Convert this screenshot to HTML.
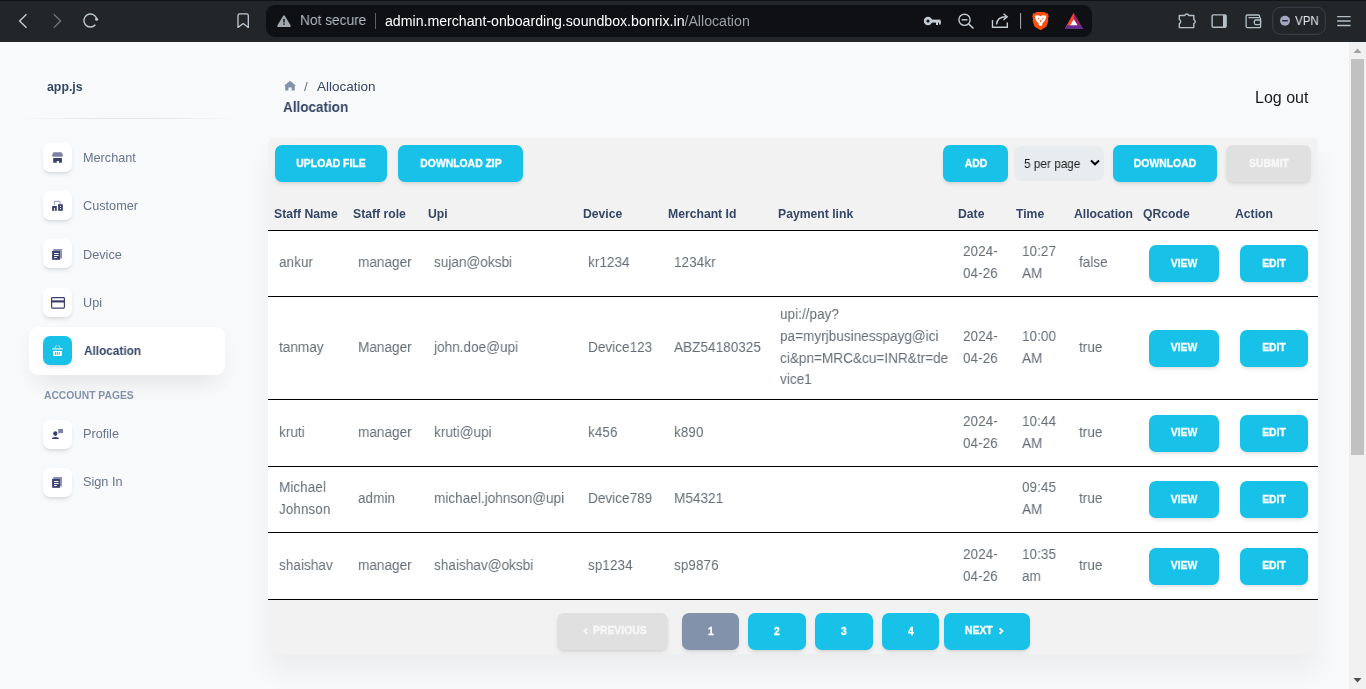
<!DOCTYPE html>
<html><head><meta charset="utf-8"><title>Allocation</title>
<style>
html,body{margin:0;padding:0;width:1366px;height:689px;overflow:hidden;background:#f8f9fa}
body{position:relative;font-family:"Liberation Sans", sans-serif}
.t{position:absolute;white-space:pre;will-change:transform}
.b{position:absolute}
svg.b{overflow:visible}
</style></head><body>
<div class="b" style="left:0px;top:0px;width:1366px;height:42px;background:#222629"></div>
<div class="b" style="left:0px;top:0px;width:1366px;height:1px;background:#111315"></div>
<svg class="b" style="left:0;top:0" width="260" height="42">
<path d="M26.5 14.2 L19.6 21 L26.5 27.8" fill="none" stroke="#c3ccd3" stroke-width="1.4"/>
<path d="M53.8 14.2 L60.6 21 L53.8 27.8" fill="none" stroke="#6b7277" stroke-width="1.4"/>
<path d="M95.38 24.68 A6.5 6.5 0 1 1 96.51 18.28" fill="none" stroke="#c3ccd3" stroke-width="1.4"/>
<circle cx="96.6" cy="19.2" r="1.5" fill="#c3ccd3"/>
<path d="M238 15.5 Q238 13.8 239.7 13.8 H246.6 Q248.3 13.8 248.3 15.5 V27.4 L243.15 23.6 L238 27.4 Z" fill="none" stroke="#c3ccd3" stroke-width="1.3" stroke-linejoin="round"/>
</svg>
<div class="b" style="left:266px;top:5px;width:826px;height:32px;background:#0e1013;border-radius:9px"></div>
<svg class="b" style="left:270px;top:10px" width="30" height="24">
<path d="M14 6.2 L19.9 16 H8.1 Z" fill="#a2a8ad" stroke="#a2a8ad" stroke-width="1.8" stroke-linejoin="round"/>
<rect x="13.3" y="8.9" width="1.4" height="3.6" fill="#0e1013"/>
<rect x="13.3" y="13.4" width="1.4" height="1.4" fill="#0e1013"/>
</svg>
<div class="t" style="left:299.90px;top:13.38px;font-size:14.80px;line-height:14.80px;color:#b3bcc6;font-weight:400;transform:scaleX(0.9259);transform-origin:0 0;">Not secure</div>
<div class="b" style="left:375px;top:13px;width:1px;height:16px;background:#5c6166"></div>
<div class="t" style="left:385.30px;top:13.72px;font-size:14.15px;line-height:14.15px;color:#67748e;font-weight:400;"><span style="color:#fff">admin.merchant-onboarding.soundbox.bonrix.in</span><span style="color:#9aa0a6">/Allocation</span></div>
<svg class="b" style="left:900px;top:0" width="200" height="42">
<circle cx="28" cy="21" r="4.2" fill="#c3ccd3"/>
<circle cx="28" cy="21" r="1.6" fill="#0e1013"/>
<rect x="30" y="19.6" width="10.5" height="3" fill="#c3ccd3"/>
<rect x="36" y="21" width="2" height="4" fill="#c3ccd3"/>
<rect x="39" y="21" width="1.8" height="3.5" fill="#c3ccd3"/>
<circle cx="64.5" cy="19.8" r="5.6" fill="none" stroke="#c3ccd3" stroke-width="1.4"/>
<path d="M61.6 19.8 H67.4" stroke="#c3ccd3" stroke-width="1.4"/>
<path d="M68.6 23.9 L73.5 28.5" stroke="#c3ccd3" stroke-width="1.5"/>
<path d="M92.5 20 V27.3 H107.3 V22.5" fill="none" stroke="#c3ccd3" stroke-width="1.4"/>
<path d="M96.5 24.5 C97 18.5 101 16.8 106 16.8" fill="none" stroke="#c3ccd3" stroke-width="1.4"/>
<path d="M103.5 13.8 L107.2 16.8 L103.5 19.9" fill="none" stroke="#c3ccd3" stroke-width="1.4"/>
<rect x="120" y="13" width="1.1" height="15.8" fill="#9c9fa3"/>
<path d="M136.5 12 H144.5 L146.5 13.5 L148 13.3 L148.6 16.5 L148 19 L148.3 21 L146.5 26.5 L140.5 30.2 L134.5 26.5 L132.7 21 L133 19 L132.4 16.5 L133 13.3 L134.5 13.5 Z" fill="#ff4f0f"/>
<path d="M134.8 15.8 L138.3 15.2 L140.5 16.2 L142.7 15.2 L146.2 15.8 L145.6 19.3 L144 21.8 L142.4 23.2 L142.2 25.2 L140.5 26 L138.8 25.2 L138.6 23.2 L137 21.8 L135.4 19.3 Z" fill="#fff"/>
<path d="M137.3 18 L139.2 18.6 L138.6 19.8 Z M143.7 18 L141.8 18.6 L142.4 19.8 Z M139.4 20.3 H141.6 L140.5 22.6 Z" fill="#ff4f0f"/>
<path d="M173.8 12.8 L183.2 29 H164.8 Z" fill="#9e1f63"/>
<path d="M173.8 12.8 L173.8 29 H164.8 Z" fill="#ff4724"/>
<path d="M166.9 25.2 H180.9 L183.2 29 H164.8 Z" fill="#662d91"/>
<path d="M173.8 19.2 L177.5 25.2 H170.1 Z" fill="#fff"/>
</svg>
<svg class="b" style="left:1160px;top:0" width="206" height="42">
<path d="M19.3 15.5 H24.8 A2.1 2.1 0 0 1 28.8 15.5 H33.8 V19.6 A2.1 2.1 0 0 1 33.8 23.6 V27.6 H19.3 V23.6 A2.1 2.1 0 0 0 19.3 19.6 Z" fill="none" stroke="#b4c0c8" stroke-width="1.4" stroke-linejoin="round"/>
<rect x="52.1" y="14.9" width="14" height="12.3" rx="1.2" fill="none" stroke="#b4c0c8" stroke-width="1.4"/>
<rect x="63" y="14.9" width="3.1" height="12.3" fill="#b4c0c8"/>
<path d="M99.6 17.6 V16.2 A1.2 1.2 0 0 0 98.4 15 H87.4 A1.3 1.3 0 0 0 86.1 16.3 V26.3 A1.3 1.3 0 0 0 87.4 27.6 H99.4 A1.2 1.2 0 0 0 100.6 26.4 V18.8 A1.2 1.2 0 0 0 99.4 17.6 H88.5" fill="none" stroke="#b4c0c8" stroke-width="1.3"/>
<rect x="94.3" y="20" width="6.3" height="4.6" rx="1.5" fill="none" stroke="#b4c0c8" stroke-width="1.3"/>
<rect x="112.8" y="7.3" width="52.5" height="27" rx="8" fill="none" stroke="#3d4349" stroke-width="1"/>
<circle cx="125" cy="20.7" r="5" fill="#a3a6c1"/>
<rect x="122.2" y="20" width="5.6" height="1.4" fill="#23272b"/>
<path d="M177.2 16.6 H190.6 M177.2 21 H190.6 M177.2 25.5 H190.6" stroke="#b4c0c8" stroke-width="1.3"/>
</svg>
<div class="t" style="left:1294.50px;top:14.20px;font-size:12.99px;line-height:12.99px;color:#e8eaed;font-weight:400;transform:scaleX(0.8929);transform-origin:0 0;">VPN</div>
<div class="b" style="left:0px;top:42px;width:1349px;height:647px;background:#f8f9fa"></div>
<div class="b" style="left:1349px;top:42px;width:17px;height:647px;background:#f1f1f1"></div>
<div class="b" style="left:1351px;top:59px;width:13px;height:396px;background:#c1c1c1"></div>
<svg class="b" style="left:1349px;top:42px" width="17" height="647">
<path d="M4.5 11 L8.5 6.5 L12.5 11 Z" fill="#a3a3a3"/>
<path d="M4.5 636 L8.5 640.5 L12.5 636 Z" fill="#505050"/>
</svg>
<div class="t" style="left:47.00px;top:80.95px;font-size:12.35px;line-height:12.35px;color:#344767;font-weight:700;">app.js</div>
<div class="b" style="left:14px;top:118px;width:226px;height:1px;background:linear-gradient(90deg,rgba(52,71,103,0),rgba(52,71,103,.12) 45%,rgba(52,71,103,.12) 55%,rgba(52,71,103,0))"></div>
<div class="b" style="left:29px;top:327px;width:196px;height:47.5px;background:#fff;border-radius:9px;box-shadow:0 18px 25px -10px rgba(0,0,0,.06), 0 8px 18px rgba(0,0,0,.03)"></div>
<div class="b" style="left:43px;top:143.0px;width:29px;height:29px;border-radius:7px;background:#fff;box-shadow:0 3px 5px -1px rgba(0,0,0,.09),0 2px 3px -1px rgba(0,0,0,.07)"></div>
<div class="t" style="left:83.20px;top:152.25px;font-size:12.70px;line-height:12.70px;color:#67748e;font-weight:400;">Merchant</div>
<div class="b" style="left:43px;top:191.2px;width:29px;height:29px;border-radius:7px;background:#fff;box-shadow:0 3px 5px -1px rgba(0,0,0,.09),0 2px 3px -1px rgba(0,0,0,.07)"></div>
<div class="t" style="left:83.20px;top:200.45px;font-size:12.70px;line-height:12.70px;color:#67748e;font-weight:400;">Customer</div>
<div class="b" style="left:43px;top:239.4px;width:29px;height:29px;border-radius:7px;background:#fff;box-shadow:0 3px 5px -1px rgba(0,0,0,.09),0 2px 3px -1px rgba(0,0,0,.07)"></div>
<div class="t" style="left:83.20px;top:248.65px;font-size:12.70px;line-height:12.70px;color:#67748e;font-weight:400;">Device</div>
<div class="b" style="left:43px;top:287.7px;width:29px;height:29px;border-radius:7px;background:#fff;box-shadow:0 3px 5px -1px rgba(0,0,0,.09),0 2px 3px -1px rgba(0,0,0,.07)"></div>
<div class="t" style="left:83.20px;top:296.95px;font-size:12.70px;line-height:12.70px;color:#67748e;font-weight:400;">Upi</div>
<div class="b" style="left:43px;top:336.0px;width:29px;height:29px;border-radius:7px;background:#17c1e8;box-shadow:0 3px 5px -1px rgba(0,0,0,.09),0 2px 3px -1px rgba(0,0,0,.07)"></div>
<div class="t" style="left:84.00px;top:344.91px;font-size:12.51px;line-height:12.51px;color:#344767;font-weight:700;transform:scaleX(0.9434);transform-origin:0 0;">Allocation</div>
<div class="t" style="left:43.50px;top:390.88px;font-size:10.30px;line-height:10.30px;color:#8392ab;font-weight:700;">ACCOUNT PAGES</div>
<div class="b" style="left:43px;top:419.6px;width:29px;height:29px;border-radius:7px;background:#fff;box-shadow:0 3px 5px -1px rgba(0,0,0,.09),0 2px 3px -1px rgba(0,0,0,.07)"></div>
<div class="t" style="left:83.10px;top:427.85px;font-size:12.70px;line-height:12.70px;color:#67748e;font-weight:400;">Profile</div>
<div class="b" style="left:43px;top:467.8px;width:29px;height:29px;border-radius:7px;background:#fff;box-shadow:0 3px 5px -1px rgba(0,0,0,.09),0 2px 3px -1px rgba(0,0,0,.07)"></div>
<div class="t" style="left:83.10px;top:476.05px;font-size:12.70px;line-height:12.70px;color:#67748e;font-weight:400;">Sign In</div>
<svg class="b" style="left:0;top:0" width="80" height="500">
<path d="M53.5 152.3 H61.5 L63 155.3 Q63 156.8 61.6 156.8 H53.4 Q52 156.8 52 155.3 Z" fill="#7d81a6"/>
<path d="M53.2 157.9 H61.9 V162.8 H59 V160.9 H56.8 V162.8 H53.2 Z" fill="#3a416f"/>
<path d="M54.4 205 V201.3 H60 V204.2" fill="none" stroke="#8f93b4" stroke-width="1"/>
<rect x="52.1" y="206" width="4.7" height="4.8" fill="#3a416f"/>
<rect x="54" y="208" width="0.9" height="2.8" fill="#fff"/>
<rect x="58.1" y="204.2" width="4.7" height="6.6" fill="#3a416f"/>
<rect x="60" y="205.8" width="0.9" height="1.2" fill="#fff"/>
<rect x="60" y="208" width="0.9" height="1.2" fill="#fff"/>
<path d="M53.3 249.1 H62 V258.5 H60.1 V250.9 H53.3 Z" fill="#8f93b4"/>
<rect x="52.1" y="250.9" width="8" height="8.9" fill="#3a416f"/>
<rect x="54.1" y="253.0" width="4.5" height="1" fill="#fff"/><rect x="54.1" y="255.0" width="4.5" height="1" fill="#fff"/><rect x="54.1" y="257.0" width="2.7" height="1" fill="#fff"/>
<rect x="51.6" y="297.7" width="12.8" height="10.4" rx="0.8" fill="none" stroke="#3a416f" stroke-width="1.2"/>
<rect x="51.6" y="300.3" width="12.8" height="2.2" fill="#3a416f"/>
<path d="M54.9 348 L56.5 345.1 M58.6 345.1 L60.2 348" stroke="rgba(255,255,255,.75)" stroke-width="0.9"/>
<rect x="52.1" y="348" width="10.9" height="1.8" rx="0.5" fill="rgba(255,255,255,.6)"/>
<path d="M53 350.9 H61.9 V355 Q61.9 356 60.9 356 H54 Q53 356 53 355 Z" fill="#fff"/>
<rect x="55" y="352" width="1.1" height="2.7" rx="0.5" fill="#17c1e8"/><rect x="56.8" y="352" width="1.1" height="2.7" rx="0.5" fill="#17c1e8"/><rect x="58.7" y="352" width="1.1" height="2.7" rx="0.5" fill="#17c1e8"/>
<ellipse cx="55.3" cy="433.6" rx="2.1" ry="2.35" fill="#3a416f"/>
<path d="M51.9 439 Q52 437 55.4 437 Q58.8 437 59 439 Z" fill="#3a416f"/>
<path d="M58.2 429.1 H63 V432.9 H59.7 L59.2 433.8 L58.2 432.9 Z" fill="#7d81a6"/>
<path d="M53.3 477.1 H62 V486.5 H60.1 V478.9 H53.3 Z" fill="#8f93b4"/>
<rect x="52.1" y="478.9" width="8" height="8.9" fill="#3a416f"/>
<rect x="54.1" y="481.0" width="4.5" height="1" fill="#fff"/><rect x="54.1" y="483.0" width="4.5" height="1" fill="#fff"/><rect x="54.1" y="485.0" width="2.7" height="1" fill="#fff"/>
</svg>
<svg class="b" style="left:282px;top:78px" width="16" height="16">
<path d="M2 7.8 L8 2.7 L14 7.8 L12.8 7.8 V12.6 H9.6 V9.6 H6.4 V12.6 H3.2 V7.8 Z" fill="#8392ab"/>
</svg>
<div class="t" style="left:303.50px;top:79.67px;font-size:13.50px;line-height:13.50px;color:#6c757d;font-weight:400;">/</div>
<div class="t" style="left:316.80px;top:79.97px;font-size:13.50px;line-height:13.50px;color:#344767;font-weight:400;">Allocation</div>
<div class="t" style="left:283.00px;top:99.83px;font-size:14.85px;line-height:14.85px;color:#344767;font-weight:700;transform:scaleX(0.9091);transform-origin:0 0;">Allocation</div>
<div class="t" style="left:1255.30px;top:90.31px;font-size:16.00px;line-height:16.00px;color:#1a1a1a;font-weight:400;">Log out</div>
<div class="b" style="left:268px;top:138px;width:1050px;height:516px;background:#f2f2f2;border-radius:6px;box-shadow:0 18px 27px 0 rgba(0,0,0,.05)"></div>
<div class="b" style="left:275px;top:145px;width:112px;height:37px;background:#17c1e8;border-radius:7px;box-shadow:0 3px 5px -1px rgba(0,0,0,.09),0 2px 3px -1px rgba(0,0,0,.07);"></div>
<div class="t" style="left:131.00px;width:400px;text-align:center;top:158.50px;font-size:10.4px;line-height:10.4px;color:#fff;font-weight:700;-webkit-text-stroke:0.3px #fff;">UPLOAD FILE</div>
<div class="b" style="left:398px;top:145px;width:125px;height:37px;background:#17c1e8;border-radius:7px;box-shadow:0 3px 5px -1px rgba(0,0,0,.09),0 2px 3px -1px rgba(0,0,0,.07);"></div>
<div class="t" style="left:260.50px;width:400px;text-align:center;top:158.50px;font-size:10.4px;line-height:10.4px;color:#fff;font-weight:700;-webkit-text-stroke:0.3px #fff;">DOWNLOAD ZIP</div>
<div class="b" style="left:943px;top:145px;width:65px;height:37px;background:#17c1e8;border-radius:7px;box-shadow:0 3px 5px -1px rgba(0,0,0,.09),0 2px 3px -1px rgba(0,0,0,.07);"></div>
<div class="t" style="left:775.50px;width:400px;text-align:center;top:158.50px;font-size:10.4px;line-height:10.4px;color:#fff;font-weight:700;-webkit-text-stroke:0.3px #fff;">ADD</div>
<div class="b" style="left:1014px;top:146.3px;width:90px;height:34.7px;background:#e9ecef;border-radius:7px"></div>
<div class="t" style="left:1023.50px;top:157.31px;font-size:12.98px;line-height:12.98px;color:#1a1a1a;font-weight:400;transform:scaleX(0.9091);transform-origin:0 0;">5 per page</div>
<svg class="b" style="left:1088px;top:156px" width="14" height="14"><path d="M3 4.5 L7 8.3 L11 4.5" fill="none" stroke="#000" stroke-width="2"/></svg>
<div class="b" style="left:1113px;top:145px;width:104px;height:37px;background:#17c1e8;border-radius:7px;box-shadow:0 3px 5px -1px rgba(0,0,0,.09),0 2px 3px -1px rgba(0,0,0,.07);"></div>
<div class="t" style="left:965.00px;width:400px;text-align:center;top:158.50px;font-size:10.4px;line-height:10.4px;color:#fff;font-weight:700;-webkit-text-stroke:0.3px #fff;">DOWNLOAD</div>
<div class="b" style="left:1226px;top:145px;width:85px;height:37px;background:#e0e0e0;border-radius:7px;box-shadow:0 3px 5px -1px rgba(0,0,0,.09),0 2px 3px -1px rgba(0,0,0,.07);"></div>
<div class="t" style="left:1068.50px;width:400px;text-align:center;top:158.50px;font-size:10.4px;line-height:10.4px;color:#f7f7f7;font-weight:700;-webkit-text-stroke:0.3px #f7f7f7;">SUBMIT</div>
<div class="t" style="left:273.70px;top:207.67px;font-size:12.20px;line-height:12.20px;color:#344767;font-weight:700;">Staff Name</div>
<div class="t" style="left:352.50px;top:207.67px;font-size:12.20px;line-height:12.20px;color:#344767;font-weight:700;">Staff role</div>
<div class="t" style="left:428.40px;top:207.67px;font-size:12.20px;line-height:12.20px;color:#344767;font-weight:700;">Upi</div>
<div class="t" style="left:582.50px;top:207.67px;font-size:12.20px;line-height:12.20px;color:#344767;font-weight:700;">Device</div>
<div class="t" style="left:668.30px;top:207.67px;font-size:12.20px;line-height:12.20px;color:#344767;font-weight:700;">Merchant Id</div>
<div class="t" style="left:777.70px;top:207.67px;font-size:12.20px;line-height:12.20px;color:#344767;font-weight:700;">Payment link</div>
<div class="t" style="left:957.90px;top:207.67px;font-size:12.20px;line-height:12.20px;color:#344767;font-weight:700;">Date</div>
<div class="t" style="left:1016.00px;top:207.67px;font-size:12.20px;line-height:12.20px;color:#344767;font-weight:700;">Time</div>
<div class="t" style="left:1073.70px;top:207.67px;font-size:12.20px;line-height:12.20px;color:#344767;font-weight:700;">Allocation</div>
<div class="t" style="left:1143.30px;top:207.67px;font-size:12.20px;line-height:12.20px;color:#344767;font-weight:700;">QRcode</div>
<div class="t" style="left:1235.10px;top:207.67px;font-size:12.20px;line-height:12.20px;color:#344767;font-weight:700;">Action</div>
<div class="b" style="left:268px;top:230px;width:1050px;height:370px;background:#fff"></div>
<div class="b" style="left:268px;top:230px;width:1050px;height:1px;background:#000"></div>
<div class="b" style="left:268px;top:296px;width:1050px;height:1px;background:#000"></div>
<div class="b" style="left:268px;top:399px;width:1050px;height:1px;background:#000"></div>
<div class="b" style="left:268px;top:466px;width:1050px;height:1px;background:#000"></div>
<div class="b" style="left:268px;top:532px;width:1050px;height:1px;background:#000"></div>
<div class="b" style="left:268px;top:599px;width:1050px;height:1px;background:#000"></div>
<div class="t" style="left:279.40px;top:254.08px;font-size:15.50px;line-height:15.50px;color:#656e77;font-weight:400;transform:scaleX(0.8772);transform-origin:0 0;">ankur</div>
<div class="t" style="left:358.00px;top:254.08px;font-size:15.50px;line-height:15.50px;color:#656e77;font-weight:400;transform:scaleX(0.8772);transform-origin:0 0;">manager</div>
<div class="t" style="left:434.00px;top:254.08px;font-size:15.50px;line-height:15.50px;color:#656e77;font-weight:400;transform:scaleX(0.8772);transform-origin:0 0;">sujan@oksbi</div>
<div class="t" style="left:588.00px;top:254.08px;font-size:15.50px;line-height:15.50px;color:#656e77;font-weight:400;transform:scaleX(0.8772);transform-origin:0 0;">kr1234</div>
<div class="t" style="left:673.80px;top:254.08px;font-size:15.50px;line-height:15.50px;color:#656e77;font-weight:400;transform:scaleX(0.8772);transform-origin:0 0;">1234kr</div>
<div class="t" style="left:963.40px;top:243.15px;font-size:15.50px;line-height:15.50px;color:#656e77;font-weight:400;transform:scaleX(0.8772);transform-origin:0 0;">2024-</div>
<div class="t" style="left:963.40px;top:265.00px;font-size:15.50px;line-height:15.50px;color:#656e77;font-weight:400;transform:scaleX(0.8772);transform-origin:0 0;">04-26</div>
<div class="t" style="left:1021.80px;top:243.15px;font-size:15.50px;line-height:15.50px;color:#656e77;font-weight:400;transform:scaleX(0.8772);transform-origin:0 0;">10:27</div>
<div class="t" style="left:1021.80px;top:265.00px;font-size:15.50px;line-height:15.50px;color:#656e77;font-weight:400;transform:scaleX(0.8772);transform-origin:0 0;">AM</div>
<div class="t" style="left:1079.40px;top:254.08px;font-size:15.50px;line-height:15.50px;color:#656e77;font-weight:400;transform:scaleX(0.8772);transform-origin:0 0;">false</div>
<div class="b" style="left:1149px;top:245.0px;width:70px;height:37.0px;background:#17c1e8;border-radius:7px;box-shadow:0 3px 5px -1px rgba(0,0,0,.09),0 2px 3px -1px rgba(0,0,0,.07);"></div>
<div class="t" style="left:984.00px;width:400px;text-align:center;top:258.50px;font-size:10.4px;line-height:10.4px;color:#fff;font-weight:700;-webkit-text-stroke:0.3px #fff;">VIEW</div>
<div class="b" style="left:1240px;top:245.0px;width:68px;height:37.0px;background:#17c1e8;border-radius:7px;box-shadow:0 3px 5px -1px rgba(0,0,0,.09),0 2px 3px -1px rgba(0,0,0,.07);"></div>
<div class="t" style="left:1074.00px;width:400px;text-align:center;top:258.50px;font-size:10.4px;line-height:10.4px;color:#fff;font-weight:700;-webkit-text-stroke:0.3px #fff;">EDIT</div>
<div class="t" style="left:279.40px;top:338.58px;font-size:15.50px;line-height:15.50px;color:#656e77;font-weight:400;transform:scaleX(0.8772);transform-origin:0 0;">tanmay</div>
<div class="t" style="left:358.00px;top:338.58px;font-size:15.50px;line-height:15.50px;color:#656e77;font-weight:400;transform:scaleX(0.8772);transform-origin:0 0;">Manager</div>
<div class="t" style="left:434.00px;top:338.58px;font-size:15.50px;line-height:15.50px;color:#656e77;font-weight:400;transform:scaleX(0.8772);transform-origin:0 0;">john.doe@upi</div>
<div class="t" style="left:588.00px;top:338.58px;font-size:15.50px;line-height:15.50px;color:#656e77;font-weight:400;transform:scaleX(0.8772);transform-origin:0 0;">Device123</div>
<div class="t" style="left:673.80px;top:338.58px;font-size:15.50px;line-height:15.50px;color:#656e77;font-weight:400;transform:scaleX(0.8772);transform-origin:0 0;">ABZ54180325</div>
<div class="t" style="left:779.50px;top:305.80px;font-size:15.50px;line-height:15.50px;color:#656e77;font-weight:400;transform:scaleX(0.8772);transform-origin:0 0;">upi://pay?</div>
<div class="t" style="left:779.50px;top:327.65px;font-size:15.50px;line-height:15.50px;color:#656e77;font-weight:400;transform:scaleX(0.8772);transform-origin:0 0;">pa=myrjbusinesspayg@ici</div>
<div class="t" style="left:779.50px;top:349.50px;font-size:15.50px;line-height:15.50px;color:#656e77;font-weight:400;transform:scaleX(0.8772);transform-origin:0 0;">ci&amp;pn=MRC&amp;cu=INR&amp;tr=de</div>
<div class="t" style="left:779.50px;top:371.35px;font-size:15.50px;line-height:15.50px;color:#656e77;font-weight:400;transform:scaleX(0.8772);transform-origin:0 0;">vice1</div>
<div class="t" style="left:963.40px;top:327.65px;font-size:15.50px;line-height:15.50px;color:#656e77;font-weight:400;transform:scaleX(0.8772);transform-origin:0 0;">2024-</div>
<div class="t" style="left:963.40px;top:349.50px;font-size:15.50px;line-height:15.50px;color:#656e77;font-weight:400;transform:scaleX(0.8772);transform-origin:0 0;">04-26</div>
<div class="t" style="left:1021.80px;top:327.65px;font-size:15.50px;line-height:15.50px;color:#656e77;font-weight:400;transform:scaleX(0.8772);transform-origin:0 0;">10:00</div>
<div class="t" style="left:1021.80px;top:349.50px;font-size:15.50px;line-height:15.50px;color:#656e77;font-weight:400;transform:scaleX(0.8772);transform-origin:0 0;">AM</div>
<div class="t" style="left:1079.40px;top:338.58px;font-size:15.50px;line-height:15.50px;color:#656e77;font-weight:400;transform:scaleX(0.8772);transform-origin:0 0;">true</div>
<div class="b" style="left:1149px;top:329.5px;width:70px;height:37.0px;background:#17c1e8;border-radius:7px;box-shadow:0 3px 5px -1px rgba(0,0,0,.09),0 2px 3px -1px rgba(0,0,0,.07);"></div>
<div class="t" style="left:984.00px;width:400px;text-align:center;top:343.00px;font-size:10.4px;line-height:10.4px;color:#fff;font-weight:700;-webkit-text-stroke:0.3px #fff;">VIEW</div>
<div class="b" style="left:1240px;top:329.5px;width:68px;height:37.0px;background:#17c1e8;border-radius:7px;box-shadow:0 3px 5px -1px rgba(0,0,0,.09),0 2px 3px -1px rgba(0,0,0,.07);"></div>
<div class="t" style="left:1074.00px;width:400px;text-align:center;top:343.00px;font-size:10.4px;line-height:10.4px;color:#fff;font-weight:700;-webkit-text-stroke:0.3px #fff;">EDIT</div>
<div class="t" style="left:279.40px;top:423.58px;font-size:15.50px;line-height:15.50px;color:#656e77;font-weight:400;transform:scaleX(0.8772);transform-origin:0 0;">kruti</div>
<div class="t" style="left:358.00px;top:423.58px;font-size:15.50px;line-height:15.50px;color:#656e77;font-weight:400;transform:scaleX(0.8772);transform-origin:0 0;">manager</div>
<div class="t" style="left:434.00px;top:423.58px;font-size:15.50px;line-height:15.50px;color:#656e77;font-weight:400;transform:scaleX(0.8772);transform-origin:0 0;">kruti@upi</div>
<div class="t" style="left:588.00px;top:423.58px;font-size:15.50px;line-height:15.50px;color:#656e77;font-weight:400;transform:scaleX(0.8772);transform-origin:0 0;">k456</div>
<div class="t" style="left:673.80px;top:423.58px;font-size:15.50px;line-height:15.50px;color:#656e77;font-weight:400;transform:scaleX(0.8772);transform-origin:0 0;">k890</div>
<div class="t" style="left:963.40px;top:412.65px;font-size:15.50px;line-height:15.50px;color:#656e77;font-weight:400;transform:scaleX(0.8772);transform-origin:0 0;">2024-</div>
<div class="t" style="left:963.40px;top:434.50px;font-size:15.50px;line-height:15.50px;color:#656e77;font-weight:400;transform:scaleX(0.8772);transform-origin:0 0;">04-26</div>
<div class="t" style="left:1021.80px;top:412.65px;font-size:15.50px;line-height:15.50px;color:#656e77;font-weight:400;transform:scaleX(0.8772);transform-origin:0 0;">10:44</div>
<div class="t" style="left:1021.80px;top:434.50px;font-size:15.50px;line-height:15.50px;color:#656e77;font-weight:400;transform:scaleX(0.8772);transform-origin:0 0;">AM</div>
<div class="t" style="left:1079.40px;top:423.58px;font-size:15.50px;line-height:15.50px;color:#656e77;font-weight:400;transform:scaleX(0.8772);transform-origin:0 0;">true</div>
<div class="b" style="left:1149px;top:414.5px;width:70px;height:37.0px;background:#17c1e8;border-radius:7px;box-shadow:0 3px 5px -1px rgba(0,0,0,.09),0 2px 3px -1px rgba(0,0,0,.07);"></div>
<div class="t" style="left:984.00px;width:400px;text-align:center;top:428.00px;font-size:10.4px;line-height:10.4px;color:#fff;font-weight:700;-webkit-text-stroke:0.3px #fff;">VIEW</div>
<div class="b" style="left:1240px;top:414.5px;width:68px;height:37.0px;background:#17c1e8;border-radius:7px;box-shadow:0 3px 5px -1px rgba(0,0,0,.09),0 2px 3px -1px rgba(0,0,0,.07);"></div>
<div class="t" style="left:1074.00px;width:400px;text-align:center;top:428.00px;font-size:10.4px;line-height:10.4px;color:#fff;font-weight:700;-webkit-text-stroke:0.3px #fff;">EDIT</div>
<div class="t" style="left:279.40px;top:479.15px;font-size:15.50px;line-height:15.50px;color:#656e77;font-weight:400;transform:scaleX(0.8772);transform-origin:0 0;">Michael</div>
<div class="t" style="left:279.40px;top:501.00px;font-size:15.50px;line-height:15.50px;color:#656e77;font-weight:400;transform:scaleX(0.8772);transform-origin:0 0;">Johnson</div>
<div class="t" style="left:358.00px;top:490.08px;font-size:15.50px;line-height:15.50px;color:#656e77;font-weight:400;transform:scaleX(0.8772);transform-origin:0 0;">admin</div>
<div class="t" style="left:434.00px;top:490.08px;font-size:15.50px;line-height:15.50px;color:#656e77;font-weight:400;transform:scaleX(0.8772);transform-origin:0 0;">michael.johnson@upi</div>
<div class="t" style="left:588.00px;top:490.08px;font-size:15.50px;line-height:15.50px;color:#656e77;font-weight:400;transform:scaleX(0.8772);transform-origin:0 0;">Device789</div>
<div class="t" style="left:673.80px;top:490.08px;font-size:15.50px;line-height:15.50px;color:#656e77;font-weight:400;transform:scaleX(0.8772);transform-origin:0 0;">M54321</div>
<div class="t" style="left:1021.80px;top:479.15px;font-size:15.50px;line-height:15.50px;color:#656e77;font-weight:400;transform:scaleX(0.8772);transform-origin:0 0;">09:45</div>
<div class="t" style="left:1021.80px;top:501.00px;font-size:15.50px;line-height:15.50px;color:#656e77;font-weight:400;transform:scaleX(0.8772);transform-origin:0 0;">AM</div>
<div class="t" style="left:1079.40px;top:490.08px;font-size:15.50px;line-height:15.50px;color:#656e77;font-weight:400;transform:scaleX(0.8772);transform-origin:0 0;">true</div>
<div class="b" style="left:1149px;top:481.0px;width:70px;height:37.0px;background:#17c1e8;border-radius:7px;box-shadow:0 3px 5px -1px rgba(0,0,0,.09),0 2px 3px -1px rgba(0,0,0,.07);"></div>
<div class="t" style="left:984.00px;width:400px;text-align:center;top:494.50px;font-size:10.4px;line-height:10.4px;color:#fff;font-weight:700;-webkit-text-stroke:0.3px #fff;">VIEW</div>
<div class="b" style="left:1240px;top:481.0px;width:68px;height:37.0px;background:#17c1e8;border-radius:7px;box-shadow:0 3px 5px -1px rgba(0,0,0,.09),0 2px 3px -1px rgba(0,0,0,.07);"></div>
<div class="t" style="left:1074.00px;width:400px;text-align:center;top:494.50px;font-size:10.4px;line-height:10.4px;color:#fff;font-weight:700;-webkit-text-stroke:0.3px #fff;">EDIT</div>
<div class="t" style="left:279.40px;top:556.58px;font-size:15.50px;line-height:15.50px;color:#656e77;font-weight:400;transform:scaleX(0.8772);transform-origin:0 0;">shaishav</div>
<div class="t" style="left:358.00px;top:556.58px;font-size:15.50px;line-height:15.50px;color:#656e77;font-weight:400;transform:scaleX(0.8772);transform-origin:0 0;">manager</div>
<div class="t" style="left:434.00px;top:556.58px;font-size:15.50px;line-height:15.50px;color:#656e77;font-weight:400;transform:scaleX(0.8772);transform-origin:0 0;">shaishav@oksbi</div>
<div class="t" style="left:588.00px;top:556.58px;font-size:15.50px;line-height:15.50px;color:#656e77;font-weight:400;transform:scaleX(0.8772);transform-origin:0 0;">sp1234</div>
<div class="t" style="left:673.80px;top:556.58px;font-size:15.50px;line-height:15.50px;color:#656e77;font-weight:400;transform:scaleX(0.8772);transform-origin:0 0;">sp9876</div>
<div class="t" style="left:963.40px;top:545.65px;font-size:15.50px;line-height:15.50px;color:#656e77;font-weight:400;transform:scaleX(0.8772);transform-origin:0 0;">2024-</div>
<div class="t" style="left:963.40px;top:567.50px;font-size:15.50px;line-height:15.50px;color:#656e77;font-weight:400;transform:scaleX(0.8772);transform-origin:0 0;">04-26</div>
<div class="t" style="left:1021.80px;top:545.65px;font-size:15.50px;line-height:15.50px;color:#656e77;font-weight:400;transform:scaleX(0.8772);transform-origin:0 0;">10:35</div>
<div class="t" style="left:1021.80px;top:567.50px;font-size:15.50px;line-height:15.50px;color:#656e77;font-weight:400;transform:scaleX(0.8772);transform-origin:0 0;">am</div>
<div class="t" style="left:1079.40px;top:556.58px;font-size:15.50px;line-height:15.50px;color:#656e77;font-weight:400;transform:scaleX(0.8772);transform-origin:0 0;">true</div>
<div class="b" style="left:1149px;top:547.5px;width:70px;height:37.0px;background:#17c1e8;border-radius:7px;box-shadow:0 3px 5px -1px rgba(0,0,0,.09),0 2px 3px -1px rgba(0,0,0,.07);"></div>
<div class="t" style="left:984.00px;width:400px;text-align:center;top:561.00px;font-size:10.4px;line-height:10.4px;color:#fff;font-weight:700;-webkit-text-stroke:0.3px #fff;">VIEW</div>
<div class="b" style="left:1240px;top:547.5px;width:68px;height:37.0px;background:#17c1e8;border-radius:7px;box-shadow:0 3px 5px -1px rgba(0,0,0,.09),0 2px 3px -1px rgba(0,0,0,.07);"></div>
<div class="t" style="left:1074.00px;width:400px;text-align:center;top:561.00px;font-size:10.4px;line-height:10.4px;color:#fff;font-weight:700;-webkit-text-stroke:0.3px #fff;">EDIT</div>
<div class="b" style="left:557px;top:613px;width:111px;height:37px;background:#e0e0e0;border-radius:7px;box-shadow:0 3px 5px -1px rgba(0,0,0,.09),0 2px 3px -1px rgba(0,0,0,.07);"></div>
<div class="t" style="left:593.00px;top:626.00px;font-size:10.40px;line-height:10.40px;color:#f7f7f7;font-weight:700;-webkit-text-stroke:0.3px #f7f7f7;">PREVIOUS</div>
<svg class="b" style="left:580px;top:625px" width="12" height="12"><path d="M7.2 3.4 L4.4 6.1 L7.2 8.8" fill="none" stroke="#f7f7f7" stroke-width="1.9"/></svg>
<div class="b" style="left:682px;top:613px;width:57px;height:37px;background:#8392ab;border-radius:7px;box-shadow:0 3px 5px -1px rgba(0,0,0,.09),0 2px 3px -1px rgba(0,0,0,.07);"></div>
<div class="t" style="left:510.50px;width:400px;text-align:center;top:626.50px;font-size:10.4px;line-height:10.4px;color:#fff;font-weight:700;-webkit-text-stroke:0.3px #fff;">1</div>
<div class="b" style="left:748px;top:613px;width:58px;height:37px;background:#17c1e8;border-radius:7px;box-shadow:0 3px 5px -1px rgba(0,0,0,.09),0 2px 3px -1px rgba(0,0,0,.07);"></div>
<div class="t" style="left:577.00px;width:400px;text-align:center;top:626.50px;font-size:10.4px;line-height:10.4px;color:#fff;font-weight:700;-webkit-text-stroke:0.3px #fff;">2</div>
<div class="b" style="left:815px;top:613px;width:58px;height:37px;background:#17c1e8;border-radius:7px;box-shadow:0 3px 5px -1px rgba(0,0,0,.09),0 2px 3px -1px rgba(0,0,0,.07);"></div>
<div class="t" style="left:644.00px;width:400px;text-align:center;top:626.50px;font-size:10.4px;line-height:10.4px;color:#fff;font-weight:700;-webkit-text-stroke:0.3px #fff;">3</div>
<div class="b" style="left:882px;top:613px;width:57px;height:37px;background:#17c1e8;border-radius:7px;box-shadow:0 3px 5px -1px rgba(0,0,0,.09),0 2px 3px -1px rgba(0,0,0,.07);"></div>
<div class="t" style="left:710.50px;width:400px;text-align:center;top:626.50px;font-size:10.4px;line-height:10.4px;color:#fff;font-weight:700;-webkit-text-stroke:0.3px #fff;">4</div>
<div class="b" style="left:944px;top:613px;width:86px;height:37px;background:#17c1e8;border-radius:7px;box-shadow:0 3px 5px -1px rgba(0,0,0,.09),0 2px 3px -1px rgba(0,0,0,.07);"></div>
<div class="t" style="left:965.10px;top:626.00px;font-size:10.40px;line-height:10.40px;color:#fff;font-weight:700;-webkit-text-stroke:0.3px #fff;">NEXT</div>
<svg class="b" style="left:996px;top:625px" width="12" height="12"><path d="M3.6 3.4 L6.4 6.1 L3.6 8.8" fill="none" stroke="#fff" stroke-width="1.9"/></svg>
</body></html>
